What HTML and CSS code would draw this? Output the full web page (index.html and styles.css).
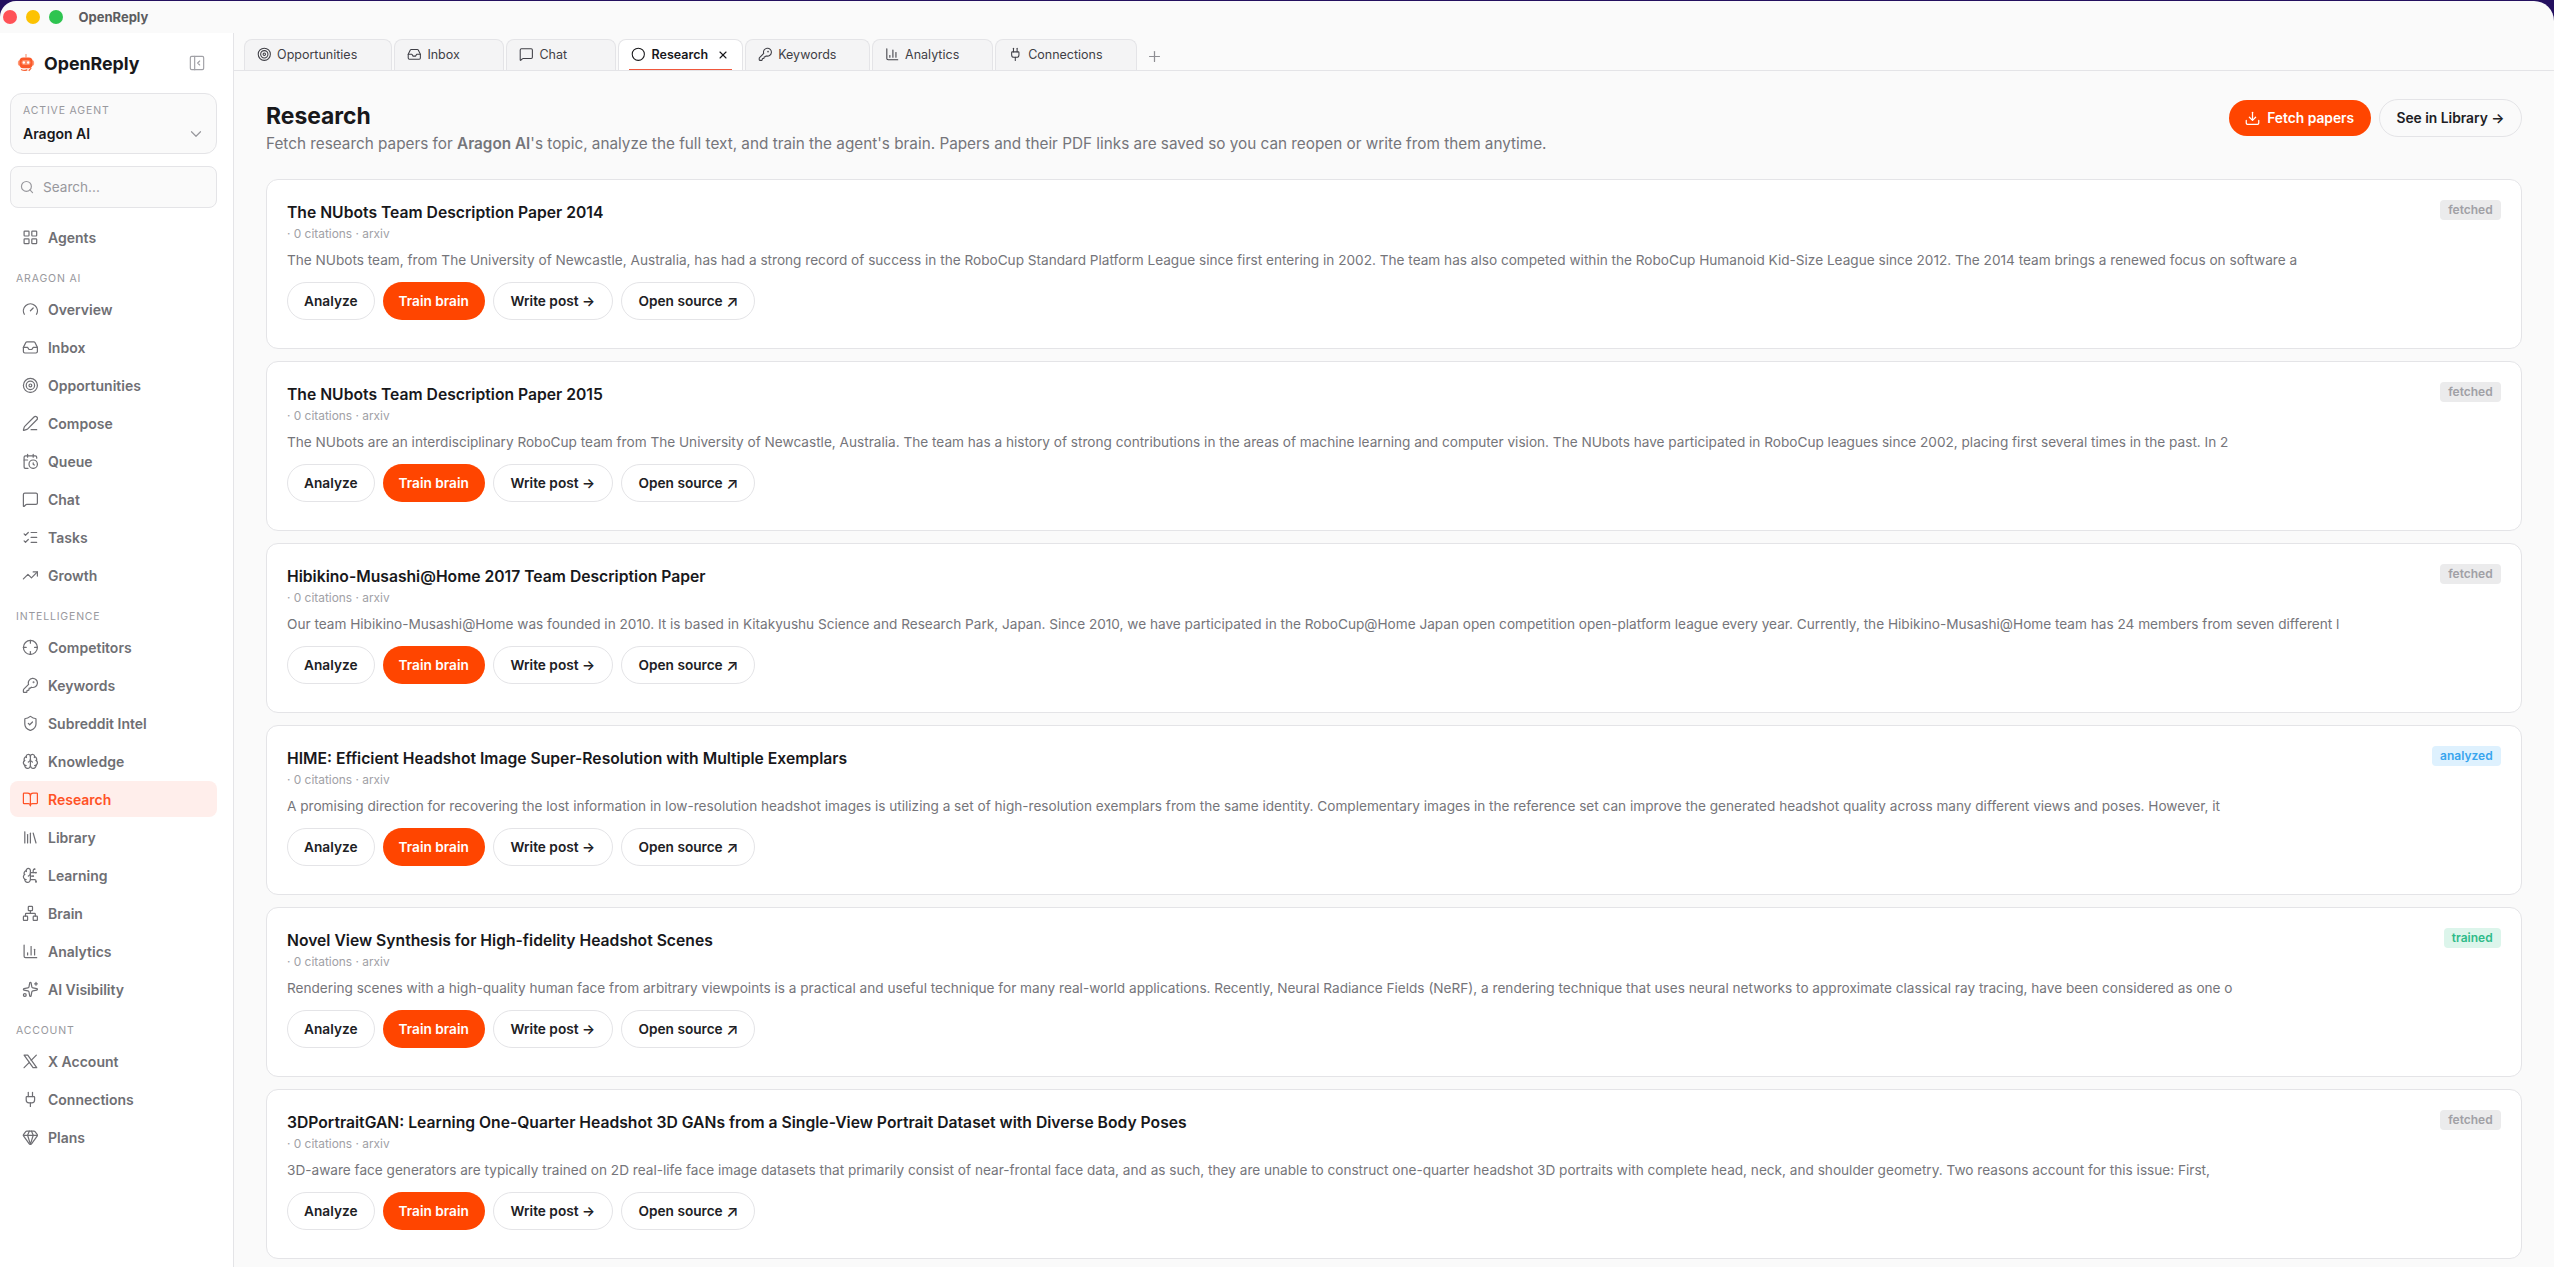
FILE: index.html
```html
<!DOCTYPE html>
<html lang="en">
<head>
    <meta charset="UTF-8">
    <meta name="viewport" content="width=device-width, initial-scale=1.0">
    <title>OpenReply</title>
    <link rel="stylesheet" href="styles.css">
</head>
<body>
    <!-- Icon set -->
    <svg class="sprite" xmlns="http://www.w3.org/2000/svg">
        <symbol id="i-grid" viewBox="0 0 24 24"><rect x="3" y="3" width="7" height="7" rx="1"/><rect x="14" y="3" width="7" height="7" rx="1"/><rect x="14" y="14" width="7" height="7" rx="1"/><rect x="3" y="14" width="7" height="7" rx="1"/></symbol>
        <symbol id="i-gauge" viewBox="0 0 24 24"><path d="m12 14 4-4"/><path d="M3.34 19a10 10 0 1 1 17.32 0"/></symbol>
        <symbol id="i-inbox" viewBox="0 0 24 24"><path d="M22 12h-6l-2 3h-4l-2-3H2"/><path d="M5.45 5.11 2 12v6a2 2 0 0 0 2 2h16a2 2 0 0 0 2-2v-6l-3.45-6.89A2 2 0 0 0 16.76 4H7.24a2 2 0 0 0-1.79 1.11z"/></symbol>
        <symbol id="i-target" viewBox="0 0 24 24"><circle cx="12" cy="12" r="10"/><circle cx="12" cy="12" r="6"/><circle cx="12" cy="12" r="2"/></symbol>
        <symbol id="i-pen" viewBox="0 0 24 24"><path d="M13 21h8"/><path d="M21.174 6.812a1 1 0 0 0-3.986-3.987L3.842 16.174a2 2 0 0 0-.5.83l-1.321 4.352a.5.5 0 0 0 .623.622l4.353-1.32a2 2 0 0 0 .83-.497z"/></symbol>
        <symbol id="i-queue" viewBox="0 0 24 24"><path d="M16 14v2.2l1.6 1"/><path d="M16 2v4"/><path d="M21 7.5V6a2 2 0 0 0-2-2H5a2 2 0 0 0-2 2v14a2 2 0 0 0 2 2h3.5"/><path d="M3 10h5"/><path d="M8 2v4"/><circle cx="16" cy="16" r="6"/></symbol>
        <symbol id="i-chat" viewBox="0 0 24 24"><path d="M22 17a2 2 0 0 1-2 2H6.828a2 2 0 0 0-1.414.586l-2.202 2.202A.71.71 0 0 1 2 21.286V5a2 2 0 0 1 2-2h16a2 2 0 0 1 2 2z"/></symbol>
        <symbol id="i-tasks" viewBox="0 0 24 24"><path d="M13 5h8"/><path d="M13 12h8"/><path d="M13 19h8"/><path d="m3 17 2 2 4-4"/><path d="m3 7 2 2 4-4"/></symbol>
        <symbol id="i-trend" viewBox="0 0 24 24"><path d="M16 7h6v6"/><path d="m22 7-8.5 8.5-5-5L2 17"/></symbol>
        <symbol id="i-cross" viewBox="0 0 24 24"><circle cx="12" cy="12" r="10"/><path d="M22 12h-4"/><path d="M6 12H2"/><path d="M12 6V2"/><path d="M12 22v-4"/></symbol>
        <symbol id="i-key" viewBox="0 0 24 24"><path d="M2.586 17.414A2 2 0 0 0 2 18.828V21a1 1 0 0 0 1 1h3a1 1 0 0 0 1-1v-1a1 1 0 0 1 1-1h1a1 1 0 0 0 1-1v-1a1 1 0 0 1 1-1h.172a2 2 0 0 0 1.414-.586l.814-.814a6.5 6.5 0 1 0-4-4z"/><circle cx="16.5" cy="7.5" r=".5" fill="currentColor"/></symbol>
        <symbol id="i-shield" viewBox="0 0 24 24"><path d="M20 13c0 5-3.5 7.5-7.66 8.95a1 1 0 0 1-.67-.01C7.5 20.5 4 18 4 13V6a1 1 0 0 1 1-1c2 0 4.5-1.2 6.24-2.72a1.17 1.17 0 0 1 1.52 0C14.51 3.81 17 5 19 5a1 1 0 0 1 1 1z"/><path d="m9 12 2 2 4-4"/></symbol>
        <symbol id="i-brain" viewBox="0 0 24 24"><path d="M12 18V5"/><path d="M15 13a4.17 4.17 0 0 1-3-4 4.17 4.17 0 0 1-3 4"/><path d="M17.598 6.5A3 3 0 1 0 12 5a3 3 0 1 0-5.598 1.5"/><path d="M17.997 5.125a4 4 0 0 1 2.526 5.77"/><path d="M18 18a4 4 0 0 0 2-7.464"/><path d="M19.967 17.483A4 4 0 1 1 12 18a4 4 0 1 1-7.967-.517"/><path d="M6 18a4 4 0 0 1-2-7.464"/><path d="M6.003 5.125a4 4 0 0 0-2.526 5.77"/></symbol>
        <symbol id="i-book" viewBox="0 0 24 24"><path d="M12 7v14"/><path d="M3 18a1 1 0 0 1-1-1V4a1 1 0 0 1 1-1h5a4 4 0 0 1 4 4 4 4 0 0 1 4-4h5a1 1 0 0 1 1 1v13a1 1 0 0 1-1 1h-6a3 3 0 0 0-3 3 3 3 0 0 0-3-3z"/></symbol>
        <symbol id="i-library" viewBox="0 0 24 24"><path d="m16 6 4 14"/><path d="M12 6v14"/><path d="M8 8v12"/><path d="M4 4v16"/></symbol>
        <symbol id="i-circuit" viewBox="0 0 24 24"><path d="M12 5a3 3 0 1 0-5.997.125 4 4 0 0 0-2.526 5.77 4 4 0 0 0 .556 6.588A4 4 0 1 0 12 18Z"/><path d="M9 13a4.5 4.5 0 0 0 3-4"/><path d="M6.003 5.125A3 3 0 0 0 6.401 6.5"/><path d="M3.477 10.896a4 4 0 0 1 .585-.396"/><path d="M6 18a4 4 0 0 1-1.967-.516"/><path d="M12 13h4"/><path d="M12 18h6a2 2 0 0 1 2 2v1"/><path d="M12 8h8"/><path d="M16 8V5a2 2 0 0 1 2-2"/><circle cx="16" cy="13" r=".5"/><circle cx="18" cy="3" r=".5"/><circle cx="20" cy="21" r=".5"/><circle cx="20" cy="8" r=".5"/></symbol>
        <symbol id="i-network" viewBox="0 0 24 24"><rect x="16" y="16" width="6" height="6" rx="1"/><rect x="2" y="16" width="6" height="6" rx="1"/><rect x="9" y="2" width="6" height="6" rx="1"/><path d="M5 16v-3a1 1 0 0 1 1-1h12a1 1 0 0 1 1 1v3"/><path d="M12 12V8"/></symbol>
        <symbol id="i-chart" viewBox="0 0 24 24"><path d="M3 3v16a2 2 0 0 0 2 2h16"/><path d="M18 17V9"/><path d="M13 17V5"/><path d="M8 17v-3"/></symbol>
        <symbol id="i-sparkles" viewBox="0 0 24 24"><path d="M11.017 2.814a1 1 0 0 1 1.966 0l1.051 5.558a2 2 0 0 0 1.594 1.594l5.558 1.051a1 1 0 0 1 0 1.966l-5.558 1.051a2 2 0 0 0-1.594 1.594l-1.051 5.558a1 1 0 0 1-1.966 0l-1.051-5.558a2 2 0 0 0-1.594-1.594l-5.558-1.051a1 1 0 0 1 0-1.966l5.558-1.051a2 2 0 0 0 1.594-1.594z"/><path d="M20 2v4"/><path d="M22 4h-4"/><circle cx="4" cy="20" r="2"/></symbol>
        <symbol id="i-x" viewBox="0 0 24 24"><path d="M3 3l12.8 18H21L8.2 3z"/><path d="M3 21l7.5-7.7m2.6-2.7L20.5 3"/></symbol>
        <symbol id="i-plug" viewBox="0 0 24 24"><path d="M12 22v-5"/><path d="M15 8V2"/><path d="M17 8a1 1 0 0 1 1 1v4a4 4 0 0 1-4 4h-4a4 4 0 0 1-4-4V9a1 1 0 0 1 1-1z"/><path d="M9 8V2"/></symbol>
        <symbol id="i-gem" viewBox="0 0 24 24"><path d="M10.5 3 8 9l4 13 4-13-2.5-6"/><path d="M17 3a2 2 0 0 1 1.6.8l3 4a2 2 0 0 1 .013 2.382l-7.99 10.986a2 2 0 0 1-3.247 0l-7.99-10.986A2 2 0 0 1 2.4 7.8l2.998-3.997A2 2 0 0 1 7 3z"/><path d="M2 9h20"/></symbol>
        <symbol id="i-panel" viewBox="0 0 24 24"><rect x="2" y="2" width="20" height="20" rx="2"/><path d="M8.5 2v20"/><path d="m16 15-3-3 3-3"/></symbol>
        <symbol id="i-search" viewBox="0 0 24 24"><circle cx="11" cy="11" r="8.5"/><path d="m21.5 21.5-4.5-4.5"/></symbol>
        <symbol id="i-chevron" viewBox="0 0 24 24"><path d="m3 7.5 9 9 9-9"/></symbol>
        <symbol id="i-circle" viewBox="0 0 24 24"><circle cx="12" cy="12" r="10"/></symbol>
        <symbol id="i-close" viewBox="0 0 24 24"><path d="M18 6 6 18"/><path d="m6 6 12 12"/></symbol>
        <symbol id="i-plus" viewBox="0 0 24 24"><path d="M5 12h14"/><path d="M12 5v14"/></symbol>
        <symbol id="i-download" viewBox="0 0 24 24"><path d="M12 2v12.5"/><path d="M22 15v4a2.5 2.5 0 0 1-2.5 2.5h-15A2.5 2.5 0 0 1 2 19v-4"/><path d="m7 10 5 5 5-5"/></symbol>
    </svg>

    <div class="window">
        <header class="titlebar">
            <span class="dot red"></span>
            <span class="dot yellow"></span>
            <span class="dot green"></span>
            <span class="window-title">OpenReply</span>
        </header>

        <div class="layout">
            <aside class="sidebar">
                <div class="brand">
                    <svg class="logo" viewBox="0 0 20 20">
                        <path d="M9.4 0h1.2v4H9.4z" fill="#f9926f"/>
                        <rect x="1" y="7" width="18" height="6" rx="2" fill="#ff9a78"/>
                        <rect x="2.8" y="3.8" width="14.4" height="12" rx="4" fill="#fb5a2a"/>
                        <rect x="5" y="6.6" width="10" height="5.6" rx="2.5" fill="#ff8d66"/>
                        <circle cx="7.6" cy="9.4" r="1.3" fill="#fff"/>
                        <circle cx="12.4" cy="9.4" r="1.3" fill="#fff"/>
                        <path d="M4.5 17.2c2.5 1.3 5 1.3 7 .2M13 18.5l2.8-2.8" fill="none" stroke="#f7683b" stroke-width="1.5"/>
                    </svg>
                    <span class="brand-name">OpenReply</span>
                    <svg class="icon collapse"><use href="#i-panel"/></svg>
                </div>

                <div class="agent">
                    <div class="agent-label">ACTIVE AGENT</div>
                    <div class="agent-row">
                        <span>Aragon AI</span>
                        <svg class="icon"><use href="#i-chevron"/></svg>
                    </div>
                </div>

                <div class="search">
                    <svg class="icon"><use href="#i-search"/></svg>
                    <span>Search...</span>
                </div>

                <nav class="nav">
                    <a class="nav-item"><svg class="icon"><use href="#i-grid"/></svg>Agents</a>

                    <div class="nav-label">ARAGON AI</div>
                    <a class="nav-item"><svg class="icon"><use href="#i-gauge"/></svg>Overview</a>
                    <a class="nav-item"><svg class="icon"><use href="#i-inbox"/></svg>Inbox</a>
                    <a class="nav-item"><svg class="icon"><use href="#i-target"/></svg>Opportunities</a>
                    <a class="nav-item"><svg class="icon"><use href="#i-pen"/></svg>Compose</a>
                    <a class="nav-item"><svg class="icon"><use href="#i-queue"/></svg>Queue</a>
                    <a class="nav-item"><svg class="icon"><use href="#i-chat"/></svg>Chat</a>
                    <a class="nav-item"><svg class="icon"><use href="#i-tasks"/></svg>Tasks</a>
                    <a class="nav-item"><svg class="icon"><use href="#i-trend"/></svg>Growth</a>

                    <div class="nav-label">INTELLIGENCE</div>
                    <a class="nav-item"><svg class="icon"><use href="#i-cross"/></svg>Competitors</a>
                    <a class="nav-item"><svg class="icon"><use href="#i-key"/></svg>Keywords</a>
                    <a class="nav-item"><svg class="icon"><use href="#i-shield"/></svg>Subreddit Intel</a>
                    <a class="nav-item"><svg class="icon"><use href="#i-brain"/></svg>Knowledge</a>
                    <a class="nav-item active"><svg class="icon"><use href="#i-book"/></svg>Research</a>
                    <a class="nav-item"><svg class="icon"><use href="#i-library"/></svg>Library</a>
                    <a class="nav-item"><svg class="icon"><use href="#i-circuit"/></svg>Learning</a>
                    <a class="nav-item"><svg class="icon"><use href="#i-network"/></svg>Brain</a>
                    <a class="nav-item"><svg class="icon"><use href="#i-chart"/></svg>Analytics</a>
                    <a class="nav-item"><svg class="icon"><use href="#i-sparkles"/></svg>AI Visibility</a>

                    <div class="nav-label">ACCOUNT</div>
                    <a class="nav-item"><svg class="icon"><use href="#i-x"/></svg>X Account</a>
                    <a class="nav-item"><svg class="icon"><use href="#i-plug"/></svg>Connections</a>
                    <a class="nav-item"><svg class="icon"><use href="#i-gem"/></svg>Plans</a>
                </nav>
            </aside>

            <main class="main">
                <div class="tabs">
                    <div class="tab tab-opportunities"><svg class="icon"><use href="#i-target"/></svg>Opportunities</div>
                    <div class="tab tab-inbox"><svg class="icon"><use href="#i-inbox"/></svg>Inbox</div>
                    <div class="tab tab-chat"><svg class="icon"><use href="#i-chat"/></svg>Chat</div>
                    <div class="tab tab-research current"><svg class="icon"><use href="#i-circle"/></svg>Research<svg class="icon close"><use href="#i-close"/></svg></div>
                    <div class="tab tab-keywords"><svg class="icon"><use href="#i-key"/></svg>Keywords</div>
                    <div class="tab tab-analytics"><svg class="icon"><use href="#i-chart"/></svg>Analytics</div>
                    <div class="tab tab-connections"><svg class="icon"><use href="#i-plug"/></svg>Connections</div>
                    <svg class="icon add-tab"><use href="#i-plus"/></svg>
                </div>

                <section class="content">
                    <div class="page-head">
                        <div>
                            <h1>Research</h1>
                            <p class="subtitle">Fetch research papers for <strong>Aragon AI</strong>'s topic, analyze the full text, and train the agent's brain. Papers and their PDF links are saved so you can reopen or write from them anytime.</p>
                        </div>
                        <div class="head-actions">
                            <button class="btn primary fetch"><svg class="icon"><use href="#i-download"/></svg>Fetch papers</button>
                            <button class="btn see">See in Library →</button>
                        </div>
                    </div>

                    <div class="papers">
                        <article class="paper">
                            <div class="paper-head">
                                <h2>The NUbots Team Description Paper 2014</h2>
                                <span class="badge">fetched</span>
                            </div>
                            <div class="meta">· 0 citations · arxiv</div>
                            <p class="abstract">The NUbots team, from The University of Newcastle, Australia, has had a strong record of success in the RoboCup Standard Platform League since first entering in 2002. The team has also competed within the RoboCup Humanoid Kid-Size League since 2012. The 2014 team brings a renewed focus on software a</p>
                            <div class="actions">
                                <button class="btn">Analyze</button>
                                <button class="btn primary">Train brain</button>
                                <button class="btn arrow">Write post →</button>
                                <button class="btn arrow">Open source <span class="out">↗</span></button>
                            </div>
                        </article>

                        <article class="paper">
                            <div class="paper-head">
                                <h2>The NUbots Team Description Paper 2015</h2>
                                <span class="badge">fetched</span>
                            </div>
                            <div class="meta">· 0 citations · arxiv</div>
                            <p class="abstract">The NUbots are an interdisciplinary RoboCup team from The University of Newcastle, Australia. The team has a history of strong contributions in the areas of machine learning and computer vision. The NUbots have participated in RoboCup leagues since 2002, placing first several times in the past. In 2</p>
                            <div class="actions">
                                <button class="btn">Analyze</button>
                                <button class="btn primary">Train brain</button>
                                <button class="btn arrow">Write post →</button>
                                <button class="btn arrow">Open source <span class="out">↗</span></button>
                            </div>
                        </article>

                        <article class="paper">
                            <div class="paper-head">
                                <h2>Hibikino-Musashi@Home 2017 Team Description Paper</h2>
                                <span class="badge">fetched</span>
                            </div>
                            <div class="meta">· 0 citations · arxiv</div>
                            <p class="abstract">Our team Hibikino-Musashi@Home was founded in 2010. It is based in Kitakyushu Science and Research Park, Japan. Since 2010, we have participated in the RoboCup@Home Japan open competition open-platform league every year. Currently, the Hibikino-Musashi@Home team has 24 members from seven different l</p>
                            <div class="actions">
                                <button class="btn">Analyze</button>
                                <button class="btn primary">Train brain</button>
                                <button class="btn arrow">Write post →</button>
                                <button class="btn arrow">Open source <span class="out">↗</span></button>
                            </div>
                        </article>

                        <article class="paper">
                            <div class="paper-head">
                                <h2>HIME: Efficient Headshot Image Super-Resolution with Multiple Exemplars</h2>
                                <span class="badge analyzed">analyzed</span>
                            </div>
                            <div class="meta">· 0 citations · arxiv</div>
                            <p class="abstract">A promising direction for recovering the lost information in low-resolution headshot images is utilizing a set of high-resolution exemplars from the same identity. Complementary images in the reference set can improve the generated headshot quality across many different views and poses. However, it</p>
                            <div class="actions">
                                <button class="btn">Analyze</button>
                                <button class="btn primary">Train brain</button>
                                <button class="btn arrow">Write post →</button>
                                <button class="btn arrow">Open source <span class="out">↗</span></button>
                            </div>
                        </article>

                        <article class="paper">
                            <div class="paper-head">
                                <h2>Novel View Synthesis for High-fidelity Headshot Scenes</h2>
                                <span class="badge trained">trained</span>
                            </div>
                            <div class="meta">· 0 citations · arxiv</div>
                            <p class="abstract">Rendering scenes with a high-quality human face from arbitrary viewpoints is a practical and useful technique for many real-world applications. Recently, Neural Radiance Fields (NeRF), a rendering technique that uses neural networks to approximate classical ray tracing, have been considered as one o</p>
                            <div class="actions">
                                <button class="btn">Analyze</button>
                                <button class="btn primary">Train brain</button>
                                <button class="btn arrow">Write post →</button>
                                <button class="btn arrow">Open source <span class="out">↗</span></button>
                            </div>
                        </article>

                        <article class="paper">
                            <div class="paper-head">
                                <h2>3DPortraitGAN: Learning One-Quarter Headshot 3D GANs from a Single-View Portrait Dataset with Diverse Body Poses</h2>
                                <span class="badge">fetched</span>
                            </div>
                            <div class="meta">· 0 citations · arxiv</div>
                            <p class="abstract">3D-aware face generators are typically trained on 2D real-life face image datasets that primarily consist of near-frontal face data, and as such, they are unable to construct one-quarter headshot 3D portraits with complete head, neck, and shoulder geometry. Two reasons account for this issue: First,</p>
                            <div class="actions">
                                <button class="btn">Analyze</button>
                                <button class="btn primary">Train brain</button>
                                <button class="btn arrow">Write post →</button>
                                <button class="btn arrow">Open source <span class="out">↗</span></button>
                            </div>
                        </article>
                    </div>
                </section>
            </main>
        </div>
    </div>
</body>
</html>
```

FILE: styles.css
```css
* {
    box-sizing: border-box;
}

body {
    margin: 0;
    height: 100vh;
    padding-top: 1px;
    overflow: hidden;
    background: #24105f;
    font-family: Inter, "Liberation Sans", sans-serif;
    color: #18181b;
}

.sprite {
    display: none;
}

.icon {
    flex: none;
    width: 16.8px;
    height: 16.8px;
    fill: none;
    stroke: currentColor;
    stroke-width: 1.75;
    stroke-linecap: round;
    stroke-linejoin: round;
}

.window {
    display: flex;
    flex-direction: column;
    height: 100%;
    background: #fafafa;
    border-radius: 16px 20px 0 0;
    overflow: hidden;
}

/* Title bar */
.titlebar {
    flex: none;
    display: flex;
    align-items: center;
    gap: 9px;
    height: 32px;
    padding-left: 3px;
}

.dot {
    width: 14px;
    height: 14px;
    border-radius: 50%;
}

.red {
    background: #ff5257;
}

.yellow {
    background: #fcc203;
}

.green {
    background: #2ec450;
}

.window-title {
    margin-left: 6.5px;
    font-size: 13px;
    font-weight: 700;
    color: #5c5c60;
}

.layout {
    flex: 1;
    display: flex;
    min-height: 0;
}

/* Sidebar */
.sidebar {
    flex: none;
    width: 234px;
    padding: 0 16px 0 10px;
    background: #fff;
    border-right: 1px solid #e4e4e7;
}

.brand {
    display: flex;
    align-items: center;
    height: 60px;
    padding: 0 12px 0 7px;
}

.logo {
    width: 18px;
    height: 18px;
}

.brand-name {
    margin-left: 9px;
    font-size: 17.8px;
    font-weight: 700;
}

.collapse {
    width: 16px;
    height: 16px;
    margin-left: auto;
    color: #a1a1a6;
}

.agent {
    height: 61px;
    padding: 9px 12px 0 12px;
    background: #fafafa;
    border: 1px solid #e4e4e7;
    border-radius: 12px;
}

.agent-label {
    font-size: 10.5px;
    line-height: 16px;
    letter-spacing: 0.85px;
    color: #98989d;
}

.agent-row {
    display: flex;
    align-items: center;
    justify-content: space-between;
    margin-top: 5px;
    padding-right: 2px;
    font-size: 14px;
    font-weight: 600;
    line-height: 20px;
}

.agent-row .icon {
    width: 12px;
    height: 12px;
    stroke-width: 2.4;
    color: #98989d;
}

.search {
    display: flex;
    align-items: center;
    gap: 9px;
    height: 42px;
    margin-top: 12px;
    padding-left: 9px;
    background: #fafafa;
    border: 1px solid #e4e4e7;
    border-radius: 8px;
    font-size: 13.6px;
    color: #98989d;
}

.search .icon {
    width: 14px;
    height: 14px;
    stroke-width: 2;
}

.nav {
    display: flex;
    flex-direction: column;
    gap: 2px;
    margin-top: 11px;
}

.nav-item {
    display: flex;
    align-items: center;
    gap: 9.6px;
    height: 36px;
    padding-left: 11.6px;
    border-radius: 8px;
    font-size: 14px;
    font-weight: 600;
    color: #6f6f74;
}

.nav-item.active {
    background: #ffeeeb;
    color: #ff5226;
}

.nav-label {
    height: 32px;
    padding: 14px 0 0 6px;
    font-size: 10.5px;
    line-height: 16px;
    letter-spacing: 0.83px;
    color: #98989d;
}

/* Tabs */
.main {
    flex: 1;
    min-width: 0;
}

.tabs {
    display: flex;
    align-items: flex-end;
    gap: 2.3px;
    height: 38px;
    padding-left: 10px;
    border-bottom: 1px solid #e4e4e7;
}

.tab {
    display: flex;
    align-items: center;
    gap: 5.7px;
    height: 31px;
    padding: 0 0 1px 11.8px;
    background: #f4f4f5;
    border: 1px solid #e4e4e7;
    border-bottom: none;
    border-radius: 8px 8px 0 0;
    font-size: 12.5px;
    color: #3f3f46;
}

.tab .icon {
    width: 14.6px;
    height: 14.6px;
}

.tab-opportunities {
    width: 148px;
}

.tab-inbox,
.tab-chat {
    width: 109.8px;
}

.tab-research {
    width: 124.3px;
}

.tab-keywords {
    width: 124.6px;
}

.tab-analytics {
    width: 120.8px;
}

.tab-connections {
    width: 142px;
}

.tab.current {
    position: relative;
    background: #fff;
    font-weight: 600;
    color: #18181b;
}

.tab.current::after {
    content: "";
    position: absolute;
    left: 10px;
    right: 10px;
    bottom: 0;
    height: 1px;
    background: #f0573c;
}

.tab .close {
    width: 12px;
    height: 12px;
    margin-left: 3px;
    stroke-width: 2.2;
}

.add-tab {
    width: 17px;
    height: 17px;
    margin: 0 0 5px 7px;
    color: #8e8e93;
}

/* Page */
.content {
    padding: 28px 32px 0 32px;
}

.page-head {
    display: flex;
    justify-content: space-between;
    height: 80px;
}

h1 {
    margin: 3px 0 0;
    font-size: 22.9px;
    font-weight: 700;
    line-height: 28px;
}

.subtitle {
    margin: 2px 0 0;
    font-size: 15.3px;
    line-height: 24px;
    color: #75757a;
}

.subtitle strong {
    font-weight: 600;
}

.head-actions {
    display: flex;
    align-items: center;
    gap: 8px;
    height: 38px;
}

.btn {
    display: flex;
    align-items: center;
    height: 38px;
    padding: 0 16.1px;
    background: #fff;
    border: 1px solid #e4e4e7;
    border-radius: 19px;
    font-family: inherit;
    font-size: 13.65px;
    font-weight: 600;
    color: #202024;
    white-space: pre;
}

.btn.primary {
    padding: 0 16px;
    border: none;
    background: #ff4500;
    color: #fff;
}

.btn.arrow {
    padding: 0 16.8px;
}

.out {
    margin-right: -1.5px;
    font-size: 16px;
    font-weight: 500;
    line-height: 16px;
}

.btn.fetch {
    height: 36px;
    gap: 6.8px;
    padding: 0 16.8px 0 16.2px;
    font-size: 13.8px;
}

.btn.fetch .icon {
    width: 15px;
    height: 15px;
    stroke-width: 2;
}

.btn.see {
    padding: 0 16.5px;
    background: #fafafa;
    font-size: 13.8px;
}

/* Papers */
.papers {
    display: flex;
    flex-direction: column;
    gap: 12px;
}

.paper {
    height: 170px;
    padding: 20px;
    background: #fff;
    border: 1px solid #e4e4e7;
    border-radius: 12px;
}

.paper-head {
    display: flex;
    align-items: flex-start;
    justify-content: space-between;
    height: 25px;
}

h2 {
    margin: 1px 0 0;
    font-size: 15.69px;
    font-weight: 600;
    line-height: 24px;
}

.badge {
    height: 20px;
    padding: 0 8.3px;
    border-radius: 4px;
    background: #ebebec;
    font-size: 12px;
    font-weight: 600;
    line-height: 20px;
    color: #a0a0a5;
}

.badge.analyzed {
    background: #def1fe;
    color: #38a5ee;
}

.badge.trained {
    background: #dcf5eb;
    color: #2fbb89;
}

.meta {
    font-size: 11.9px;
    line-height: 18px;
    color: #a1a1a6;
}

.abstract {
    margin: 6px 0 0;
    font-size: 13.62px;
    line-height: 22px;
    color: #75757a;
    white-space: nowrap;
}

.actions {
    display: flex;
    gap: 8px;
    margin-top: 11px;
}
```
